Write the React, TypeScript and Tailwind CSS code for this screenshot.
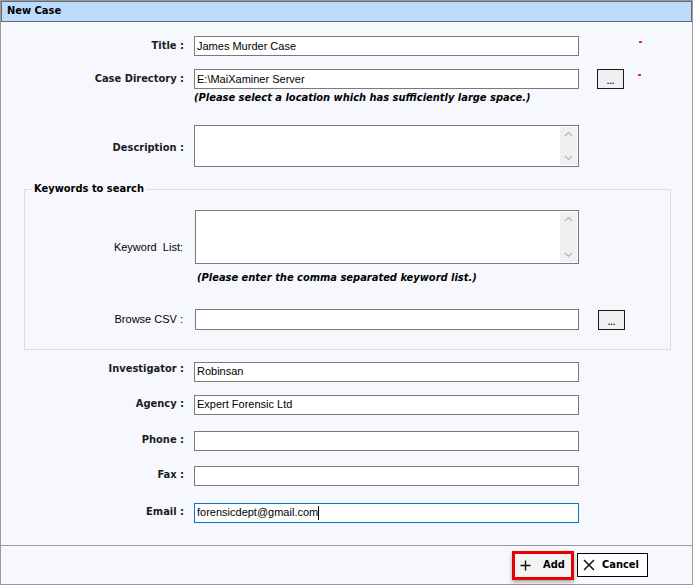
import React from "react";

const lbl = "font-['DejaVu_Sans','Liberation_Sans',sans-serif] font-bold text-[11px] text-[#1c1c1c] font-stretch-condensed";
const val = "font-['Liberation_Sans',Arial,sans-serif] text-[11px] text-black";

function Field({ value, focused, cursor }: { value?: string; focused?: boolean; cursor?: boolean }) {
  return (
    <div
      className={`w-[385px] h-[20px] bg-white border flex items-center pl-[2px] ${
        focused ? "border-[#0078d7]" : "border-[#7a7a7a]"
      } ${val}`}
    >
      {value}
      {cursor && <span className="inline-block w-px h-[14px] bg-black" />}
    </div>
  );
}

function TextArea({ h, w = "w-[385px]" }: { h: string; w?: string }) {
  return (
    <div className={`${w} ${h} bg-white border border-[#7a7a7a] flex`}>
      <div className="flex-1" />
      <div className="w-[17px] my-px mr-px bg-[#f0f0f0] flex flex-col items-center justify-between py-[4px]">
        <svg width="9" height="6" viewBox="0 0 9 6">
          <path d="M1 5 L4.5 1.5 L8 5" fill="none" stroke="#b4b4b4" strokeWidth="1.2" />
        </svg>
        <svg width="9" height="6" viewBox="0 0 9 6">
          <path d="M1 1 L4.5 4.5 L8 1" fill="none" stroke="#b4b4b4" strokeWidth="1.2" />
        </svg>
      </div>
    </div>
  );
}

function DotsButton() {
  return (
    <div className="w-[27px] h-[20px] bg-[#f0f0f0] border border-[#1a1a1a] flex items-end justify-center pb-[2px] text-[9px] leading-none font-bold text-[#1a1a1a] font-['Liberation_Sans',sans-serif]">
      ...
    </div>
  );
}

function Star() {
  return <span className="ml-[14px] self-start mt-[5px] w-[3px] h-[2px] bg-[#ff2020]" />;
}

function Row({
  label,
  children,
  className = "",
  labelClass = "",
}: {
  label: string;
  children: React.ReactNode;
  className?: string;
  labelClass?: string;
}) {
  return (
    <div className={`flex items-center ${className}`}>
      <div className={`w-[183px] text-right ${lbl} ${labelClass}`}>{label}</div>
      <div className="ml-[10px] flex items-center">{children}</div>
    </div>
  );
}

export default function App() {
  return (
    <div className="w-[693px] h-[585px] bg-[#f7f8fd] border border-[#9a9a9a] flex flex-col">
      <div className="h-[21px] bg-[#bcdcfe] border border-[#6b6b6b] flex items-center pl-[5px]">
        <span className={`${lbl} text-black`}>New Case</span>
      </div>

      <div className="flex-1 flex flex-col">
        <Row label="Title :" className="mt-[14px]">
          <Field value="James Murder Case" />
          <div className="w-[27px] ml-[19px]" />
          <Star />
        </Row>

        <Row label="Case Directory :" className="mt-[13px]">
          <Field value="E:\MaiXaminer Server" />
          <div className="ml-[18px] -mt-[1px]">
            <DotsButton />
          </div>
          <Star />
        </Row>
        <div className={`ml-[193px] mt-[1px] italic ${lbl} text-black`}>
          (Please select a location which has sufficiently large space.)
        </div>

        <Row label="Description :" className="mt-[18px]" labelClass="mt-[6px]">
          <TextArea h="h-[42px]" />
        </Row>

        <div className="relative ml-[23px] mt-[22px] w-[647px] h-[161px] border border-[#dcdde2]">
          <span className={`absolute left-[7px] -top-[8px] px-[2px] bg-[#f7f8fd] leading-[14px] ${lbl} text-black`}>
            Keywords to search
          </span>
          <div className="flex items-start mt-[20px]">
            <div className={`w-[158px] mt-[29px] text-right whitespace-pre ${val} text-[#1c1c1c] font-['DejaVu_Sans',sans-serif] font-stretch-condensed`}>
              Keyword  List:
            </div>
            <div className="ml-[12px]">
              <TextArea h="h-[54px]" w="w-[384px]" />
            </div>
          </div>
          <div className={`ml-[172px] mt-[6px] italic ${lbl} text-black`}>
            (Please enter the comma separated keyword list.)
          </div>
          <div className="flex items-center mt-[23px]">
            <div className={`w-[158px] text-right ${val} text-[#1c1c1c] font-['DejaVu_Sans',sans-serif] font-stretch-condensed`}>
              Browse CSV :
            </div>
            <div className="ml-[12px] flex items-center">
              <div className="w-[384px] h-[21px] bg-white border border-[#7a7a7a]" />
              <div className="ml-[19px]">
                <DotsButton />
              </div>
            </div>
          </div>
        </div>

        <Row label="Investigator :" className="mt-[12px]" labelClass="self-start -mt-[1px]">
          <Field value="Robinsan" />
        </Row>
        <Row label="Agency :" className="mt-[13px]">
          <Field value="Expert Forensic Ltd" />
        </Row>
        <Row label="Phone :" className="mt-[16px]">
          <Field />
        </Row>
        <Row label="Fax :" className="mt-[15px]">
          <Field />
        </Row>
        <Row label="Email :" className="mt-[17px]">
          <Field value="forensicdept@gmail.com" focused cursor />
        </Row>
      </div>

      <div className="h-[39px] border-t border-[#9a9a9a] flex items-start justify-end pr-[44px] pt-[5px] gap-[3px]">
        <div className="w-[62px] h-[29px] border-[3px] border-[#e60000] bg-[#f3f3f3] shadow-[0_2px_4px_rgba(0,0,0,0.35)] flex items-center pl-[5px] gap-[12px]">
          <svg width="11" height="11" viewBox="0 0 11 11">
            <path d="M5.5 0.5 V10.5 M0.5 5.5 H10.5" stroke="#111" strokeWidth="1.4" />
          </svg>
          <span className={`${lbl} text-black`}>Add</span>
        </div>
        <div className="mt-[2px] w-[71px] h-[24px] border border-black bg-white flex items-center pl-[5px] gap-[7px]">
          <svg width="12" height="12" viewBox="0 0 12 12">
            <path d="M1 1 L11 11 M11 1 L1 11" stroke="#111" strokeWidth="1.5" />
          </svg>
          <span className={`${lbl} text-black`}>Cancel</span>
        </div>
      </div>
    </div>
  );
}
